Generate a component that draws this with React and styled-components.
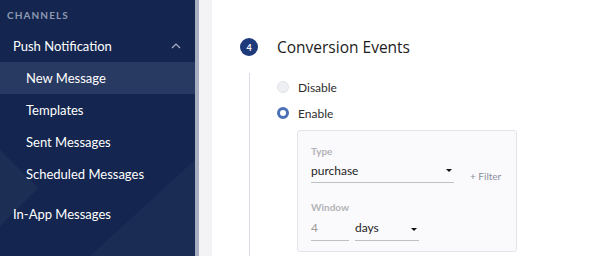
import React from "react";
import styled, { createGlobalStyle } from "styled-components";

const Global = createGlobalStyle`
  html, body {
    margin: 0;
    padding: 0;
    width: 603px;
    height: 256px;
    overflow: hidden;
    background: #ffffff;
  }
  body {
    font-family: "Lato", "Noto Sans", sans-serif;
  }
`;

const Page = styled.div`
  display: flex;
  width: 603px;
  height: 256px;
`;

const Sidebar = styled.nav`
  width: 195px;
  flex-shrink: 0;
  background: #14264f;
  position: relative;
  overflow: hidden;
  color: #ffffff;
`;

const SideDecor = styled.svg`
  position: absolute;
  left: 0;
  top: 0;
  pointer-events: none;
`;

const SideContent = styled.div`
  position: relative;
  display: flex;
  flex-direction: column;
`;

const SectionTitle = styled.div`
  font-size: 10px;
  font-weight: 700;
  letter-spacing: 1.1px;
  color: #8e99b2;
  padding: 9px 0 0 7px;
  height: 20px;
  box-sizing: border-box;
`;

const GroupHeader = styled.div`
  display: flex;
  align-items: center;
  justify-content: space-between;
  height: 32px;
  margin-top: 10px;
  padding: 0 14px 0 13px;
  font-size: 13px;
`;

const Item = styled.div`
  display: flex;
  align-items: center;
  height: 32px;
  padding-left: ${({ $indent }) => ($indent ? 26 : 13)}px;
  font-size: 13px;
  background: ${({ $active }) => ($active ? "#283a61" : "transparent")};
  margin-top: ${({ $gap }) => $gap || 0}px;
`;

const Strip = styled.div`
  width: 4px;
  flex-shrink: 0;
  background: #a6aec0;
`;

const Gutter = styled.div`
  width: 13px;
  flex-shrink: 0;
  background: #f3f3f5;
`;

const Content = styled.main`
  flex: 1;
  padding: 38px 0 0 28px;
  display: flex;
  flex-direction: column;
`;

const StepHeader = styled.div`
  display: flex;
  align-items: center;
  gap: 19px;
  height: 18px;
`;

const StepBadge = styled.div`
  width: 18px;
  height: 18px;
  border-radius: 50%;
  background: #1e3a7a;
  color: #ffffff;
  font-size: 9px;
  font-weight: 700;
  display: flex;
  align-items: center;
  justify-content: center;
`;

const StepTitle = styled.div`
  font-family: "Open Sans", "Noto Sans", sans-serif;
  font-size: 15.5px;
  color: #1c1c1c;
`;

const StepBody = styled.div`
  margin: 17px 0 0 9px;
  border-left: 1px solid #dcdde4;
  padding: 1px 0 0 27px;
  flex: 1;
  display: flex;
  flex-direction: column;
`;

const RadioRow = styled.label`
  display: flex;
  align-items: center;
  gap: 9px;
  height: 26px;
  font-size: 12px;
  color: #2e2e2e;
`;

const RadioDot = styled.span`
  width: 12px;
  height: 12px;
  border-radius: 50%;
  box-sizing: border-box;
  background: ${({ $checked }) => ($checked ? "#ffffff" : "#eeeff2")};
  border: ${({ $checked }) => ($checked ? "3px solid #4a70b5" : "1px solid #e2e3e7")};
`;

const Card = styled.div`
  margin: 4px 0 0 20px;
  width: 220px;
  height: 122px;
  box-sizing: border-box;
  border: 1px solid #e3e4e9;
  border-radius: 3px;
  background: #fafafc;
  padding: 14px 0 0 13px;
  display: flex;
  flex-direction: column;
`;

const FieldLabel = styled.div`
  font-size: 10px;
  font-weight: 700;
  color: #b4b4b8;
  height: 14px;
  margin-top: ${({ $top }) => $top || 0}px;
`;

const Row = styled.div`
  display: flex;
  align-items: flex-end;
  gap: ${({ $gap }) => $gap || 0}px;
`;

const Select = styled.div`
  width: ${({ $w }) => $w}px;
  height: ${({ $h }) => $h || 24}px;
  box-sizing: border-box;
  border-bottom: 1px solid #bfc0c6;
  display: flex;
  align-items: center;
  justify-content: space-between;
  font-size: 12px;
  color: #1e1e1e;
  padding-right: 2px;
`;

const Input = styled.div`
  width: ${({ $w }) => $w}px;
  height: 26px;
  box-sizing: border-box;
  border-bottom: 1px solid #bfc0c6;
  display: flex;
  align-items: center;
  font-size: 12px;
  color: #a09a98;
`;

const Caret = styled.span`
  width: 0;
  height: 0;
  border-left: 3px solid transparent;
  border-right: 3px solid transparent;
  border-top: 3px solid #111;
  margin-top: ${({ $down }) => $down || 0}px;
`;

const FilterLink = styled.span`
  font-size: 10px;
  color: #8a8f9c;
  padding-bottom: 1px;
`;

const Chevron = () => (
  <svg width="10" height="6" viewBox="0 0 10 6">
    <polyline points="1,5 5,1 9,5" fill="none" stroke="#a9b1c4" strokeWidth="1.2" />
  </svg>
);

export default function App() {
  return (
    <>
      <Global />
      <Page>
        <Sidebar>
          <SideDecor width="195" height="256" viewBox="0 0 195 256">
            <polygon points="0,150 38,188 0,226" fill="#ffffff" fillOpacity="0.04" />
            <polygon points="195,160 195,256 90,256" fill="#ffffff" fillOpacity="0.03" />
          </SideDecor>
          <SideContent>
            <SectionTitle>CHANNELS</SectionTitle>
            <GroupHeader>
              <span>Push Notification</span>
              <Chevron />
            </GroupHeader>
            <Item $indent $active>New Message</Item>
            <Item $indent>Templates</Item>
            <Item $indent>Sent Messages</Item>
            <Item $indent>Scheduled Messages</Item>
            <Item $gap={8}>In-App Messages</Item>
          </SideContent>
        </Sidebar>
        <Strip />
        <Gutter />
        <Content>
          <StepHeader>
            <StepBadge>4</StepBadge>
            <StepTitle>Conversion Events</StepTitle>
          </StepHeader>
          <StepBody>
            <RadioRow>
              <RadioDot />
              Disable
            </RadioRow>
            <RadioRow>
              <RadioDot $checked />
              Enable
            </RadioRow>
            <Card>
              <FieldLabel>Type</FieldLabel>
              <Row $gap={16}>
                <Select $w={143}>
                  purchase
                  <Caret />
                </Select>
                <FilterLink>+ Filter</FilterLink>
              </Row>
              <FieldLabel $top={18}>Window</FieldLabel>
              <Row $gap={6}>
                <Input $w={38}>4</Input>
                <Select $w={64} $h={26}>
                  days
                  <Caret $down={4} />
                </Select>
              </Row>
            </Card>
          </StepBody>
        </Content>
      </Page>
    </>
  );
}
